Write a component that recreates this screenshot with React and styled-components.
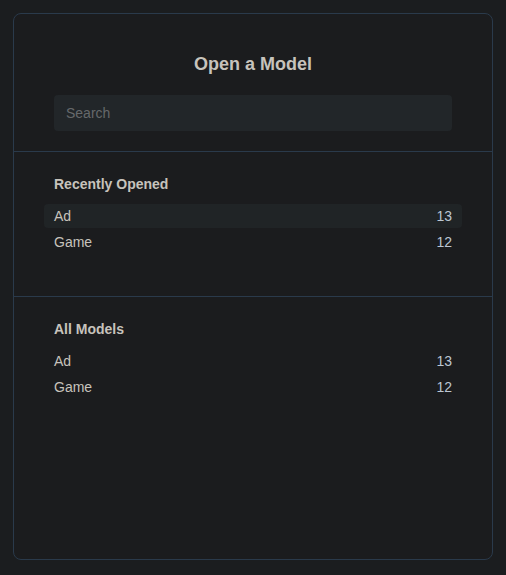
import React from "react";
import styled, { createGlobalStyle } from "styled-components";

const Global = createGlobalStyle`
  html, body { margin: 0; padding: 0; background: #1b1d1f; }
  body { font-family: "Liberation Sans", Arial, sans-serif; }
  * { box-sizing: border-box; }
`;

const Page = styled.div`
  padding: 13px;
  height: 575px;
`;

const Card = styled.div`
  height: 547px;
  border: 1px solid #2a3a4b;
  border-radius: 8px;
  background: #1b1c1e;
  display: flex;
  flex-direction: column;
`;

const Header = styled.div`
  padding: 39px 40px 20px;
  display: flex;
  flex-direction: column;
  gap: 20px;
  border-bottom: 1px solid #2a3a4b;
`;

const Title = styled.h1`
  margin: 0;
  text-align: center;
  font-size: 18px;
  line-height: 22px;
  font-weight: 700;
  color: #c7c3bc;
`;

const Search = styled.input`
  height: 36px;
  width: 100%;
  border: none;
  outline: none;
  border-radius: 4px;
  background: #222629;
  padding: 0 12px;
  font-family: inherit;
  font-size: 14px;
  color: #c7c3bc;
  caret-color: #c7c3bc;
  &::placeholder { color: #66696b; }
`;

const Section = styled.section`
  padding: 24px 30px 42px;
  display: flex;
  flex-direction: column;
  border-bottom: ${(p) => (p.$last ? "none" : "1px solid #2a3a4b")};
  flex: ${(p) => (p.$last ? 1 : "none")};
`;

const Heading = styled.h2`
  margin: 0 10px 11px;
  font-size: 14px;
  line-height: 17px;
  font-weight: 700;
  color: #c7c3bc;
`;

const List = styled.div`
  display: flex;
  flex-direction: column;
  gap: 2px;
`;

const Row = styled.div`
  height: 24px;
  padding: 0 10px;
  display: flex;
  align-items: center;
  justify-content: space-between;
  border-radius: 4px;
  background: ${(p) => (p.$active ? "#202426" : "transparent")};
  font-size: 14px;
  color: #c7c3bc;
`;

const Count = styled.span`
  color: #bcc6d2;
`;

const sections = [
  { title: "Recently Opened", items: [["Ad", 13], ["Game", 12]], active: 0 },
  { title: "All Models", items: [["Ad", 13], ["Game", 12]], active: -1 },
];

export default function App() {
  return (
    <>
      <Global />
      <Page>
        <Card>
          <Header>
            <Title>Open a Model</Title>
            <Search placeholder="Search" autoFocus />
          </Header>
          {sections.map((s, si) => (
            <Section key={s.title} $last={si === sections.length - 1}>
              <Heading>{s.title}</Heading>
              <List>
                {s.items.map(([name, n], i) => (
                  <Row key={name} $active={i === s.active}>
                    <span>{name}</span>
                    <Count>{n}</Count>
                  </Row>
                ))}
              </List>
            </Section>
          ))}
        </Card>
      </Page>
    </>
  );
}
